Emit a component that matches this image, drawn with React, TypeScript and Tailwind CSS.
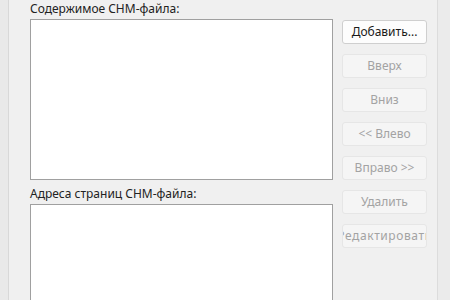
import React from "react";

function Btn({ label, enabled, wide }: { label: string; enabled?: boolean; wide?: boolean }) {
  return (
    <div
      className={
        "h-[24px] w-[85px] shrink-0 flex items-center justify-center overflow-hidden whitespace-nowrap rounded-[3px] border text-[12px] leading-[16px] " +
        (wide ? "tracking-[0.6px] " : "") +
        (enabled
          ? "border-[#cfcfcf] bg-[#fdfdfd] text-[#1a1a1a]"
          : "border-[#e6e6e6] bg-[#f5f5f5] text-[#a3a3a3]")
      }
    >
      {label}
    </div>
  );
}

export default function App() {
  return (
    <div className="w-[450px] h-[300px] flex bg-[#f0f0f0] overflow-hidden font-['Noto_Sans',sans-serif]">
      <div className="w-[9px] h-full shrink-0 bg-[#e9e9e9] border-r border-[#d8d8d8]" />
      <div className="flex flex-col shrink-0 w-[324px] pl-[21px]">
        <div className="h-[19px] shrink-0 pt-[1px] text-[12px] leading-[16px] text-[#222]">Содержимое CHM-файла:</div>
        <div className="h-[161px] shrink-0 w-[303px] bg-white border border-[#a0a0a0]" />
        <div className="h-[24px] shrink-0 pt-[6px] text-[12px] leading-[16px] text-[#222]">Адреса страниц CHM-файла:</div>
        <div className="h-[120px] shrink-0 w-[303px] bg-white border border-[#a0a0a0]" />
      </div>
      <div className="flex flex-col shrink-0 gap-[10px] pt-[20px] ml-[9px] w-[85px]">
        <Btn label="Добавить..." enabled />
        <Btn label="Вверх" />
        <Btn label="Вниз" />
        <Btn label="<< Влево" />
        <Btn label="Вправо >>" />
        <Btn label="Удалить" />
        <Btn label="Редактировать" wide />
      </div>
      <div className="ml-[10px] flex-1 h-full bg-[#ebebeb] border-l border-[#dcdcdc]" />
    </div>
  );
}
